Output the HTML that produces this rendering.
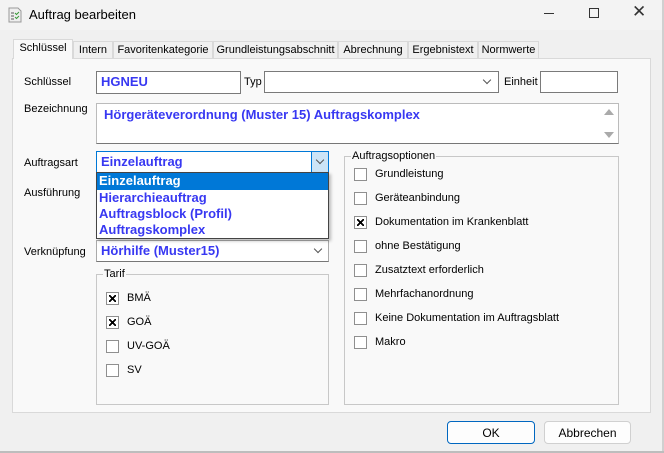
<!DOCTYPE html>
<html><head><meta charset="utf-8"><style>
*{margin:0;padding:0;box-sizing:border-box}
body{width:664px;height:453px;background:#f0f0f0;font-family:"Liberation Sans",sans-serif;font-size:11px;color:#000;position:relative;overflow:hidden}
.a{position:absolute;white-space:nowrap}
.tab{position:absolute;top:41px;height:17px;border:1px solid #d9d9d9;border-bottom:none;background:#f0f0f0;font-size:11px;padding-top:2px;text-align:center}
.box{position:absolute;background:#fff;border:1px solid #7a7a7a}
.blue{color:#3838f2;font-weight:bold;font-size:13px}
.grp{position:absolute;border:1px solid #c8c8c8}
.cb{position:absolute;width:13px;height:13px;border:1px solid #8f8f8f;background:#fff}
.cb.x::after{content:"";position:absolute;left:2px;top:2px;width:7px;height:7px;background:linear-gradient(45deg,transparent 42%,#000 42%,#000 58%,transparent 58%),linear-gradient(-45deg,transparent 42%,#000 42%,#000 58%,transparent 58%)}
.chev{position:absolute;width:6px;height:6px;border-right:1px solid #555;border-bottom:1px solid #555;transform:rotate(45deg)}
.btn{position:absolute;height:23px;background:#fdfdfd;border:1px solid #d0d0d0;border-radius:4px;text-align:center;padding-top:4px;font-size:12px}
</style></head><body>
<div class="a" style="left:0;top:0;width:664px;height:30px;background:#f3f3f3"></div>
<svg class="a" style="left:8px;top:7px" width="14" height="16"><path d="M1 1h9l3 3v11H1z" fill="#eee" stroke="#999"/><path d="M3 6h3M3 9h3M3 12h3" stroke="#555"/><path d="M7 6l1.5 1.5L11 5M7 10l1.5 1.5L11 9" stroke="#3a9a3a" fill="none"/></svg>
<div class="a" style="left:29px;top:7px;font-size:13px">Auftrag bearbeiten</div>
<div class="a" style="left:544px;top:13px;width:10px;border-top:1px solid #333"></div>
<div class="a" style="left:589px;top:8px;width:10px;height:10px;border:1px solid #333"></div>
<div class="a" style="left:632px;top:2px;font-size:17px;color:#333">✕</div>

<div class="a" style="left:12px;top:58px;width:639px;height:355px;background:#f9f9f9;border:1px solid #d9d9d9"></div>
<div class="tab" style="left:13px;top:39px;width:60px;height:20px;background:#f9f9f9;z-index:2">Schlüssel</div>
<div class="tab" style="left:73px;width:40px">Intern</div>
<div class="tab" style="left:113px;width:100px">Favoritenkategorie</div>
<div class="tab" style="left:213px;width:125px">Grundleistungsabschnitt</div>
<div class="tab" style="left:338px;width:70px">Abrechnung</div>
<div class="tab" style="left:408px;width:70px">Ergebnistext</div>
<div class="tab" style="left:478px;width:61px">Normwerte</div>

<div class="a" style="left:24px;top:76px">Schlüssel</div>
<div class="box" style="left:96px;top:71px;width:145px;height:23px"><span class="a blue" style="left:4px;top:2px">HGNEU</span></div>
<div class="a" style="left:244px;top:76px">Typ</div>
<div class="box" style="left:264px;top:71px;width:235px;height:22px"><div class="chev" style="left:219px;top:5px"></div></div>
<div class="a" style="left:504px;top:76px">Einheit</div>
<div class="box" style="left:540px;top:71px;width:78px;height:22px"></div>

<div class="a" style="left:24px;top:103px">Bezeichnung</div>
<div class="box" style="left:96px;top:103px;width:523px;height:41px;border-color:#bbb;border-bottom-color:#777"><span class="a blue" style="left:7px;top:3px">Hörgeräteverordnung (Muster 15) Auftragskomplex</span>
<div class="a" style="left:507px;top:5px;width:0;height:0;border-left:5px solid transparent;border-right:5px solid transparent;border-bottom:6px solid #aaa"></div>
<div class="a" style="left:507px;top:28px;width:0;height:0;border-left:5px solid transparent;border-right:5px solid transparent;border-top:6px solid #aaa"></div></div>

<div class="a" style="left:24px;top:157px">Auftragsart</div>
<div class="box" style="left:96px;top:151px;width:233px;height:22px;border-color:#0078d7"><span class="a blue" style="left:4px;top:2px">Einzelauftrag</span>
<div class="a" style="left:214px;top:0;width:17px;height:20px;background:#cce4f7;border-left:1px solid #0078d7"><div class="chev" style="left:5px;top:5px"></div></div></div>
<div class="a" style="left:24px;top:187px">Ausführung</div>
<div class="a" style="left:96px;top:172px;width:233px;height:67px;background:#fff;border:1px solid #444;z-index:3;box-shadow:2px 2px 3px rgba(0,0,0,.25)">
<div class="a blue" style="left:0;top:0;width:231px;height:17px;background:#0078d7;color:#fff;padding-left:2px">Einzelauftrag</div>
<div class="a blue" style="left:2px;top:17px">Hierarchieauftrag</div>
<div class="a blue" style="left:2px;top:33px">Auftragsblock (Profil)</div>
<div class="a blue" style="left:2px;top:49px">Auftragskomplex</div></div>

<div class="a" style="left:24px;top:246px">Verknüpfung</div>
<div class="box" style="left:96px;top:240px;width:233px;height:22px;border-color:#aaa;border-bottom-color:#777"><span class="a blue" style="left:4px;top:2px">Hörhilfe (Muster15)</span><div class="chev" style="left:218px;top:5px"></div></div>

<div class="grp" style="left:96px;top:274px;width:233px;height:131px"></div>
<div class="a" style="left:103px;top:268px;background:#f9f9f9;padding:0 1px">Tarif</div>
<div class="cb x" style="left:106px;top:292px"></div><div class="a" style="left:127px;top:292px">BMÄ</div>
<div class="cb x" style="left:106px;top:316px"></div><div class="a" style="left:127px;top:316px">GOÄ</div>
<div class="cb" style="left:106px;top:340px"></div><div class="a" style="left:127px;top:340px">UV-GOÄ</div>
<div class="cb" style="left:106px;top:364px"></div><div class="a" style="left:127px;top:364px">SV</div>

<div class="grp" style="left:344px;top:156px;width:275px;height:249px"></div>
<div class="a" style="left:351px;top:150px;background:#f9f9f9;padding:0 1px">Auftragsoptionen</div>
<div class="cb" style="left:354px;top:168px"></div><div class="a" style="left:375px;top:168px">Grundleistung</div>
<div class="cb" style="left:354px;top:192px"></div><div class="a" style="left:375px;top:192px">Geräteanbindung</div>
<div class="cb x" style="left:354px;top:216px"></div><div class="a" style="left:375px;top:216px">Dokumentation im Krankenblatt</div>
<div class="cb" style="left:354px;top:240px"></div><div class="a" style="left:375px;top:240px">ohne Bestätigung</div>
<div class="cb" style="left:354px;top:264px"></div><div class="a" style="left:375px;top:264px">Zusatztext erforderlich</div>
<div class="cb" style="left:354px;top:288px"></div><div class="a" style="left:375px;top:288px">Mehrfachanordnung</div>
<div class="cb" style="left:354px;top:312px"></div><div class="a" style="left:375px;top:312px">Keine Dokumentation im Auftragsblatt</div>
<div class="cb" style="left:354px;top:336px"></div><div class="a" style="left:375px;top:336px">Makro</div>

<div class="btn" style="left:447px;top:421px;width:88px;border:1px solid #0067c0">OK</div>
<div class="btn" style="left:544px;top:421px;width:87px">Abbrechen</div>
<div class="a" style="left:662px;top:0;width:2px;height:453px;background:#d0d0d0"></div>
<div class="a" style="left:0;top:451px;width:664px;height:2px;background:#bdbdbd"></div>
</body></html>
